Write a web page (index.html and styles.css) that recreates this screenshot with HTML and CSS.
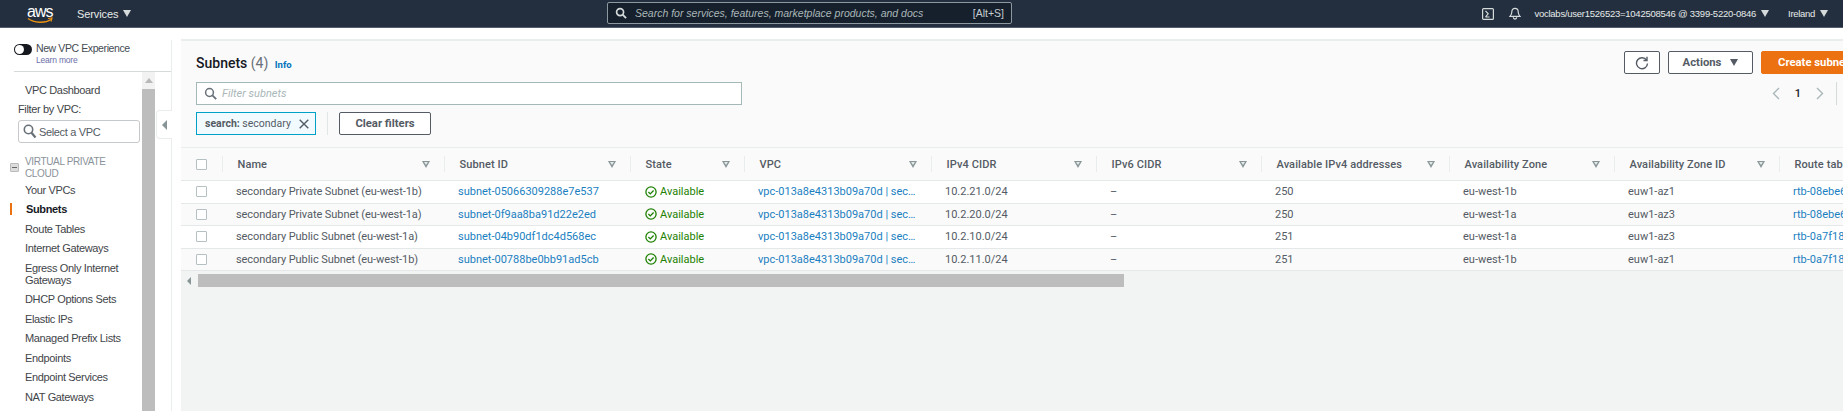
FILE: index.html
```html
<!DOCTYPE html>
<html lang="en">
<head>
<meta charset="utf-8">
<title>Subnets | VPC Console</title>
<link rel="stylesheet" href="styles.css">
</head>
<body>
<header class="topbar">
  <div class="aws-logo">
    <span class="aws-word">aws</span>
    <svg class="aws-smile" width="26" height="7" viewBox="0 0 26 7"><path d="M1 1.500C7 6 18 6.500 24 2.500" fill="none" stroke="#ec9213" stroke-width="1.500"/><path d="M21 1.500l4-.5-1 3.500" fill="none" stroke="#ec9213" stroke-width="1.200"/></svg>
  </div>
  <span class="services">Services</span><span class="caret caret-light"></span>
  <div class="global-search">
    <svg width="12" height="12" viewBox="0 0 13 13"><circle cx="5.500" cy="5.500" r="3.800" fill="none" stroke="#d5dbdb" stroke-width="1.800"/><path d="M8.300 8.300l3.700 3.700" stroke="#d5dbdb" stroke-width="2"/></svg>
    <span class="gs-text">Search for services, features, marketplace products, and docs</span>
    <span class="gs-key">[Alt+S]</span>
  </div>
  <div class="top-right">
    <svg class="cloudshell" width="12" height="12" viewBox="0 0 12 12"><rect x=".6" y=".6" width="10.800" height="10.800" rx="1" fill="none" stroke="#d5dbdb" stroke-width="1.200"/><path d="M3.500 2.800l2.700 3-2.700 3M3.500 9h4" fill="none" stroke="#d5dbdb" stroke-width="1.200"/></svg>
    <svg class="bell" width="12" height="13" viewBox="0 0 14 15"><path d="M7 1.500c-2.500 0-3.700 1.900-3.700 4 0 2.700-.8 4-2.100 5.300h11.600C11.500 9.500 10.700 8.200 10.700 5.500c0-2.100-1.200-4-3.700-4z" fill="none" stroke="#d5dbdb" stroke-width="1.400"/><path d="M5 12a2 2 0 0 0 4 0" fill="none" stroke="#d5dbdb" stroke-width="1.400"/></svg>
    <span class="acct">voclabs/user1526523=1042508546 @ 3399-5220-0846</span><span class="caret caret-light"></span>
    <span class="region">Ireland</span><span class="caret caret-light"></span>
  </div>
</header>
<div class="subbar"></div>
<div class="layout">
  <aside class="sidebar">
    <div class="side-inner">
      <div class="exp">
        <span class="toggle"><span class="knob"></span></span>
        <div class="exp-text">
          <div class="exp-title">New VPC Experience</div>
          <div class="exp-learn">Learn more</div>
        </div>
      </div>
      <div class="nav-wrap">
        <nav class="nav">
          <a class="nav-item first">VPC Dashboard</a>
          <div class="filter-label">Filter by VPC:</div>
          <div class="vpc-select">
            <svg width="14" height="15" viewBox="0 0 14 15"><circle cx="5.500" cy="5.500" r="4.200" fill="none" stroke="#687078" stroke-width="1.600"/><path d="M8.500 8.800l4 4.700" stroke="#687078" stroke-width="2.200"/></svg>
            <span>Select a VPC</span>
          </div>
          <div class="nav-group">
            <span class="minus"></span>
            <span class="group-label">VIRTUAL PRIVATE<br>CLOUD</span>
          </div>
          <a class="nav-item">Your VPCs</a>
          <a class="nav-item active">Subnets</a>
          <a class="nav-item">Route Tables</a>
          <a class="nav-item">Internet Gateways</a>
          <a class="nav-item two">Egress Only Internet<br>Gateways</a>
          <a class="nav-item">DHCP Options Sets</a>
          <a class="nav-item">Elastic IPs</a>
          <a class="nav-item">Managed Prefix Lists</a>
          <a class="nav-item">Endpoints</a>
          <a class="nav-item">Endpoint Services</a>
          <a class="nav-item">NAT Gateways</a>
        </nav>
        <div class="side-scroll">
          <div class="ss-arrow"><span class="tri-up"></span></div>
          <div class="ss-thumb"></div>
        </div>
        <div class="collapse-col">
          <div class="collapse-btn"><span class="tri-left"></span></div>
        </div>
      </div>
    </div>
  </aside>
  <main class="main">
    <div class="panel">
      <div class="panel-head">
        <h1 class="title">Subnets <span class="count">(4)</span> <a class="info">Info</a></h1>
        <div class="head-actions">
          <button class="btn icon-btn"><svg width="14" height="14" viewBox="0 0 14 14"><path d="M11.600 4.200A5.500 5.500 0 1 0 12.500 7.500" fill="none" stroke="#545b64" stroke-width="1.400"/><path d="M8.500 4.500h3.500V.8" fill="none" stroke="#545b64" stroke-width="1.400"/></svg></button>
          <button class="btn actions">Actions<span class="caret caret-dark"></span></button>
          <button class="btn primary">Create subnet</button>
        </div>
      </div>
      <div class="filter-row">
        <div class="filter-input">
          <svg width="13" height="13" viewBox="0 0 13 13"><circle cx="5.500" cy="5.500" r="3.900" fill="none" stroke="#687078" stroke-width="1.500"/><path d="M8.400 8.400l3.800 3.800" stroke="#687078" stroke-width="1.800"/></svg>
          <span>Filter subnets</span>
        </div>
        <div class="pager">
          <svg width="8" height="13" viewBox="0 0 8 13"><path d="M7 1L1.500 6.500 7 12" fill="none" stroke="#aab7b8" stroke-width="1.400"/></svg>
          <span class="page-no">1</span>
          <svg width="8" height="13" viewBox="0 0 8 13"><path d="M1 1l5.500 5.500L1 12" fill="none" stroke="#aab7b8" stroke-width="1.400"/></svg>
          <span class="pager-sep"></span>
        </div>
      </div>
      <div class="token-row">
        <div class="token"><span class="token-text"><b>search:</b> secondary</span>
          <svg width="10" height="10" viewBox="0 0 10 10"><path d="M.7.7l8.600 8.600M9.300.7L.7 9.300" stroke="#545b64" stroke-width="1.400"/></svg>
        </div>
        <span class="token-sep"></span>
        <button class="btn clear">Clear filters</button>
      </div>
    </div>
    <div class="table">
      <div class="row head">
        <div class="cell check"><span class="cb"></span></div>
        <div class="cell"><span>Name</span><i class="sort"></i></div>
        <div class="cell"><span>Subnet ID</span><i class="sort"></i></div>
        <div class="cell"><span>State</span><i class="sort"></i></div>
        <div class="cell"><span>VPC</span><i class="sort"></i></div>
        <div class="cell"><span>IPv4 CIDR</span><i class="sort"></i></div>
        <div class="cell"><span>IPv6 CIDR</span><i class="sort"></i></div>
        <div class="cell"><span>Available IPv4 addresses</span><i class="sort"></i></div>
        <div class="cell"><span>Availability Zone</span><i class="sort"></i></div>
        <div class="cell"><span>Availability Zone ID</span><i class="sort"></i></div>
        <div class="cell"><span>Route table</span></div>
      </div>
      <div class="row">
        <div class="cell check"><span class="cb"></span></div>
        <div class="cell name">secondary Private Subnet (eu-west-1b)</div>
        <div class="cell link">subnet-05066309288e7e537</div>
        <div class="cell state"><svg width="12" height="12" viewBox="0 0 12 12"><circle cx="6" cy="6" r="5.100" fill="none" stroke="#1d8102" stroke-width="1.300"/><path d="M3.400 6l1.900 1.900 3.300-3.400" fill="none" stroke="#1d8102" stroke-width="1.300"/></svg>Available</div>
        <div class="cell link">vpc-013a8e4313b09a70d | sec…</div>
        <div class="cell">10.2.21.0/24</div>
        <div class="cell">–</div>
        <div class="cell">250</div>
        <div class="cell">eu-west-1b</div>
        <div class="cell">euw1-az1</div>
        <div class="cell link">rtb-08ebe6</div>
      </div>
      <div class="row alt">
        <div class="cell check"><span class="cb"></span></div>
        <div class="cell name">secondary Private Subnet (eu-west-1a)</div>
        <div class="cell link">subnet-0f9aa8ba91d22e2ed</div>
        <div class="cell state"><svg width="12" height="12" viewBox="0 0 12 12"><circle cx="6" cy="6" r="5.100" fill="none" stroke="#1d8102" stroke-width="1.300"/><path d="M3.400 6l1.900 1.900 3.300-3.400" fill="none" stroke="#1d8102" stroke-width="1.300"/></svg>Available</div>
        <div class="cell link">vpc-013a8e4313b09a70d | sec…</div>
        <div class="cell">10.2.20.0/24</div>
        <div class="cell">–</div>
        <div class="cell">250</div>
        <div class="cell">eu-west-1a</div>
        <div class="cell">euw1-az3</div>
        <div class="cell link">rtb-08ebe6</div>
      </div>
      <div class="row">
        <div class="cell check"><span class="cb"></span></div>
        <div class="cell name">secondary Public Subnet (eu-west-1a)</div>
        <div class="cell link">subnet-04b90df1dc4d568ec</div>
        <div class="cell state"><svg width="12" height="12" viewBox="0 0 12 12"><circle cx="6" cy="6" r="5.100" fill="none" stroke="#1d8102" stroke-width="1.300"/><path d="M3.400 6l1.900 1.900 3.300-3.400" fill="none" stroke="#1d8102" stroke-width="1.300"/></svg>Available</div>
        <div class="cell link">vpc-013a8e4313b09a70d | sec…</div>
        <div class="cell">10.2.10.0/24</div>
        <div class="cell">–</div>
        <div class="cell">251</div>
        <div class="cell">eu-west-1a</div>
        <div class="cell">euw1-az3</div>
        <div class="cell link">rtb-0a7f18</div>
      </div>
      <div class="row alt">
        <div class="cell check"><span class="cb"></span></div>
        <div class="cell name">secondary Public Subnet (eu-west-1b)</div>
        <div class="cell link">subnet-00788be0bb91ad5cb</div>
        <div class="cell state"><svg width="12" height="12" viewBox="0 0 12 12"><circle cx="6" cy="6" r="5.100" fill="none" stroke="#1d8102" stroke-width="1.300"/><path d="M3.400 6l1.900 1.900 3.300-3.400" fill="none" stroke="#1d8102" stroke-width="1.300"/></svg>Available</div>
        <div class="cell link">vpc-013a8e4313b09a70d | sec…</div>
        <div class="cell">10.2.11.0/24</div>
        <div class="cell">–</div>
        <div class="cell">251</div>
        <div class="cell">eu-west-1b</div>
        <div class="cell">euw1-az1</div>
        <div class="cell link">rtb-0a7f18</div>
      </div>
    </div>
    <div class="h-scroll">
      <span class="tri-left small"></span>
      <div class="h-thumb"></div>
    </div>
  </main>
</div>
</body>
</html>
```
FILE: styles.css
```css
* { box-sizing: border-box; }
html, body { margin: 0; height: 100%; overflow: hidden; }
body { width: 1843px; height: 411px; font-family: "Liberation Sans", Arial, sans-serif; background: #fff; color: #16191f; display: flex; flex-direction: column; }

.topbar { height: 28px; flex: none; background: #232f3e; border-bottom: 1px solid #545f6d; display: flex; align-items: center; padding-left: 27px; color: #e6eaea; position: relative; }
.aws-logo { width: 25px; height: 22px; position: relative; margin-right: 25px; }
.aws-word { position: absolute; left: 0; top: 0; font-size: 16px; line-height: 17px; color: #fff; letter-spacing: -1px; }
.aws-smile { position: absolute; left: 0; top: 14px; }
.services { font-size: 11px; letter-spacing: -0.1px; }
.caret { display: inline-block; width: 0; height: 0; border-left: 4px solid transparent; border-right: 4px solid transparent; border-top: 7px solid #d5dbdb; }
.caret-light { margin-left: 5px; }
.global-search { position: absolute; left: 607px; top: 2px; width: 405px; height: 22px; border: 1px solid #8d99a1; background: #16202c; border-radius: 2px; display: flex; align-items: center; padding: 0 7px; gap: 8px; color: #aab7b8; font-size: 10.5px; }
.gs-text { font-style: italic; flex: 1; white-space: nowrap; }
.gs-key { color: #c5cdd0; }
.top-right { margin-left: auto; display: flex; align-items: center; font-size: 9.500px; letter-spacing: -0.25px; padding-right: 15px; }
.cloudshell { margin-right: 15px; }
.bell { margin-right: 13px; }
.region { margin-left: 19px; letter-spacing: -0.3px; }

.subbar { height: 11px; flex: none; background: #fff; }
.layout { flex: 1; display: flex; min-height: 0; }

.sidebar { width: 181px; flex: none; background: #fff; display: flex; }
.side-inner { width: 172px; border-right: 1px solid #eaeded; display: flex; flex-direction: column; margin-top: 1px; }
.exp { height: 32px; margin-left: 14px; flex: none; border-bottom: 1px solid #d5dbdb; display: flex; gap: 4px; padding-top: 1px; }
.toggle { width: 18px; height: 11px; border-radius: 6px; background: #16191f; position: relative; margin-top: 3px; flex: none; }
.knob { position: absolute; left: 1px; top: 1px; width: 9px; height: 9px; border-radius: 50%; background: #fff; }
.exp-title { font-size: 10.500px; letter-spacing: -0.4px; color: #444b52; line-height: 14px; }
.exp-learn { font-size: 8.500px; letter-spacing: -0.2px; color: #6b6fa8; line-height: 11px; }
.nav-wrap { flex: 1; display: flex; min-height: 0; }
.nav { width: 142px; flex: none; font-size: 11px; letter-spacing: -0.35px; color: #3f4549; padding-left: 10px; }
.nav-item { display: flex; align-items: center; height: 19.500px; padding-left: 15px; white-space: nowrap; }
.nav-item.first { height: 20px; margin-top: 8px; }
.nav-item.two { height: 31.600px; line-height: 12px; display: block; padding-top: 4px; }
.nav-item.active { position: relative; font-weight: bold; color: #16191f; padding-left: 16px; }
.nav-item.active::before { content: ""; position: absolute; left: 0; top: 3px; width: 2px; height: 12px; background: #ec7211; }
.filter-label { font-size: 11px; padding-left: 8px; height: 19px; line-height: 19px; }
.vpc-select { margin: 1px 0 0 8px; width: 122px; height: 23px; border: 1px solid #c6c9cc; border-radius: 3px; display: flex; align-items: center; gap: 2px; padding-left: 4px; color: #545b64; }
.nav-group { display: flex; align-items: center; gap: 6px; margin-top: 12px; height: 25px; font-size: 10px; line-height: 12px; letter-spacing: -0.35px; color: #8a9299; }
.minus { width: 9px; height: 9px; background: #dcdcdc; border: 1px solid #bbb; border-radius: 1px; position: relative; flex: none; }
.minus::after { content: ""; position: absolute; left: 1px; right: 1px; top: 3px; height: 1px; background: #666; }
.side-scroll { width: 13px; flex: none; background: #f2f2f2; display: flex; flex-direction: column; }
.ss-arrow { height: 17px; display: flex; align-items: center; justify-content: center; }
.ss-thumb { flex: 1; background: #bdbdbd; }
.tri-up { width: 0; height: 0; border-left: 4px solid transparent; border-right: 4px solid transparent; border-bottom: 5px solid #b8b8b8; }
.collapse-col { flex: 1; padding-top: 38px; }
.collapse-btn { height: 29px; margin: 0 -1px 0 1px; background: #fff; border: 1px solid #eaeded; border-right: 0; border-radius: 4px 0 0 4px; display: flex; align-items: center; justify-content: center; position: relative; }
.tri-left { display: inline-block; width: 0; height: 0; border-top: 5px solid transparent; border-bottom: 5px solid transparent; border-right: 5px solid #879596; }
.tri-left.small { border-top-width: 4px; border-bottom-width: 4px; border-right-width: 4px; flex: none; }

.main { flex: 1; min-width: 0; overflow: hidden; background: #f2f3f3; font-family: Roboto, sans-serif; }
.panel { background: #fafafa; border-top: 2px solid #eaeded; padding: 10px 0 12px; }
.panel-head { display: flex; justify-content: space-between; align-items: center; padding-left: 15px; height: 23px; }
.title { margin: 0; font-size: 14px; font-weight: 500; color: #16191f; }
.count { font-weight: 400; color: #687078; }
.info { font-size: 9.500px; color: #0073bb; font-weight: 700; margin-left: 3px; }
.head-actions { display: flex; gap: 8px; margin-right: -28px; }
.btn { font-family: inherit; background: #fff; border: 1px solid #545b64; border-radius: 2px; color: #545b64; font-weight: 700; font-size: 11.300px; height: 23px; padding: 0; display: inline-flex; align-items: center; justify-content: center; }
.icon-btn { width: 36px; }
.actions { width: 85px; gap: 9px; }
.caret-dark { border-top-color: #545b64; }
.primary { width: 110px; background: #ec7211; border-color: #ec7211; color: #fff; justify-content: flex-start; padding-left: 16px; white-space: nowrap; }
.filter-row { display: flex; justify-content: space-between; padding-left: 15px; margin-top: 8px; }
.filter-input { width: 546px; height: 23px; background: #fff; border: 1px solid #a5b8b8; display: flex; align-items: center; gap: 5px; padding-left: 7px; font-size: 11px; font-style: italic; color: #aab7b8; }
.pager { display: flex; align-items: center; gap: 15px; height: 23px; margin-right: 6px; color: #16191f; font-size: 11px; font-weight: 500; }
.pager-sep { width: 1px; height: 23px; background: #d5dbdb; margin-left: -3px; }
.token-row { display: flex; align-items: center; padding-left: 15px; margin-top: 7px; height: 23px; }
.token { width: 120px; height: 23px; background: #f1faff; border: 1px solid #00a1c9; display: flex; align-items: center; justify-content: space-between; padding: 0 6px 0 8px; font-size: 10.500px; color: #545b64; white-space: nowrap; }
.token-text b { font-weight: 700; }
.token-sep { width: 1px; height: 23px; background: #e3e6e6; margin: 0 11px; }
.clear { width: 92px; }

.table { border-top: 1px solid #eaeded; display: grid; grid-template-columns: 41px 222px 186px 114px 187px 165px 165px 188px 165px 165px 65px; grid-template-rows: 33px repeat(4, 22.500px); overflow: hidden; }
.row { display: contents; }
.cell { display: flex; align-items: center; padding-left: 14px; font-size: 11px; color: #545b64; white-space: nowrap; overflow: hidden; background: #fff; border-bottom: 1px solid #e5e8e8; }
.cell.name { letter-spacing: -0.08px; }
.row.alt .cell { background: #fafafa; }
.row.head .cell { background: #fafafa; font-weight: 500; letter-spacing: 0.1px; padding-left: 15.500px; justify-content: space-between; padding-right: 14px; position: relative; }
.row.head .cell:not(.check)::before { content: ""; position: absolute; left: 0; top: 8px; height: 16px; width: 1px; background: #eaeded; }
.cell.check, .row.head .cell.check { padding-left: 15px; justify-content: flex-start; }
.cb { width: 11px; height: 11px; background: #fff; border: 1px solid #b4c0c1; border-radius: 1px; flex: none; }
.sort { position: relative; width: 0; height: 0; border-left: 4px solid transparent; border-right: 4px solid transparent; border-top: 7px solid #879596; flex: none; }
.sort::after { content: ""; position: absolute; left: -2px; top: -6px; width: 0; height: 0; border-left: 2px solid transparent; border-right: 2px solid transparent; border-top: 3px solid #e4e8e8; }
.link { color: #1a7fc1; }
.cell.state { color: #1d8102; gap: 3px; padding-left: 15px; }
.state svg { flex: none; }
.h-scroll { height: 18px; display: flex; align-items: center; padding: 3px 0 2px 6px; gap: 7px; }
.h-thumb { width: 926px; height: 13px; background: #bdbdbd; }
```
